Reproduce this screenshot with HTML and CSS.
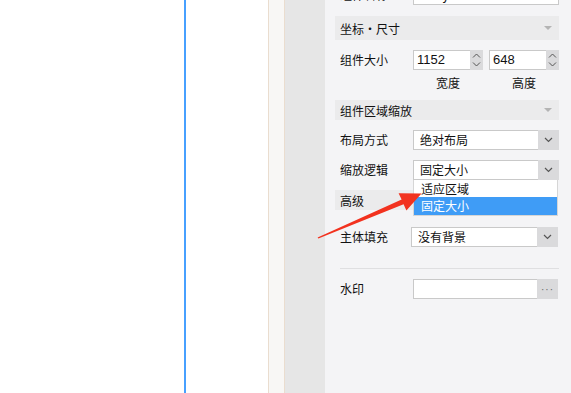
FILE: index.html
```html
<!DOCTYPE html>
<html lang="zh-CN">
<head>
<meta charset="utf-8">
<title>属性面板</title>
<link rel="stylesheet" href="styles.css">
</head>
<body>
<div class="app">
  <div class="canvas-left"></div>
  <div class="guide"></div>
  <div class="canvas-right"></div>
  <div class="ruler"></div>
  <div class="gutter"></div>
  <div class="panel">
    <div class="row row-first">
      <span class="label">组件名称</span>
      <div class="field field-wide"><span class="val">Body</span></div>
    </div>

    <div class="section section-tall"><span>坐标・尺寸</span><i class="tri"></i></div>

    <div class="row">
      <span class="label">组件大小</span>
      <div class="spin-group">
        <div class="spin"><span class="num">1152</span><span class="spin-btn"><svg width="9" height="16" viewBox="0 0 9 16"><path d="M1 5.5 L4.5 2 L8 5.5 M1 10.5 L4.5 14 L8 10.5" fill="none" stroke="#555" stroke-width="1"/></svg></span></div>
        <div class="spin"><span class="num">648</span><span class="spin-btn"><svg width="9" height="16" viewBox="0 0 9 16"><path d="M1 5.5 L4.5 2 L8 5.5 M1 10.5 L4.5 14 L8 10.5" fill="none" stroke="#555" stroke-width="1"/></svg></span></div>
      </div>
    </div>
    <div class="sub-labels">
      <span>宽度</span>
      <span>高度</span>
    </div>

    <div class="section"><span>组件区域缩放</span><i class="tri"></i></div>

    <div class="row row-gap">
      <span class="label">布局方式</span>
      <div class="select"><span class="val">绝对布局</span><span class="drop-btn"><svg width="9" height="6" viewBox="0 0 9 6"><path d="M1 1 L4.5 4.5 L8 1" fill="none" stroke="#555" stroke-width="1.2"/></svg></span></div>
    </div>
    <div class="row row-gap10 row-dd">
      <span class="label">缩放逻辑</span>
      <div class="select"><span class="val">固定大小</span><span class="drop-btn"><svg width="9" height="6" viewBox="0 0 9 6"><path d="M1 1 L4.5 4.5 L8 1" fill="none" stroke="#555" stroke-width="1.2"/></svg></span></div>
      <ul class="dropdown">
        <li>适应区域</li>
        <li class="active">固定大小</li>
      </ul>
    </div>

    <div class="section section-high"><span>高级</span></div>

    <div class="row row-fill">
      <span class="label">主体填充</span>
      <div class="select select-shift"><span class="val">没有背景</span><span class="drop-btn"><svg width="9" height="6" viewBox="0 0 9 6"><path d="M1 1 L4.5 4.5 L8 1" fill="none" stroke="#555" stroke-width="1.2"/></svg></span></div>
    </div>

    <div class="sep"></div>

    <div class="row row-mark">
      <span class="label">水印</span>
      <div class="select"><span class="val"></span><span class="drop-btn dots">···</span></div>
    </div>
  </div>
</div>
<svg class="arrow" width="571" height="393" viewBox="0 0 571 393">
  <polygon points="317.6,237.4 401.6,199.4 398.6,193.2 421.5,193.6 406.4,210.6 403.6,204.2 318.4,238.6" fill="#f2321f"/>
</svg>
</body>
</html>
```

FILE: styles.css
```css
* { box-sizing: border-box; }
html, body { margin: 0; padding: 0; }
body {
  width: 571px;
  height: 393px;
  overflow: hidden;
  position: relative;
  font-family: "Noto Sans CJK SC", "Microsoft YaHei", sans-serif;
  font-size: 12px;
  color: #111;
  background: #fff;
}
.app { display: flex; height: 393px; }
.canvas-left { width: 184px; background: #fff; }
.guide { width: 2px; background: #47a0ff; }
.canvas-right { width: 82px; background: #fff; }
.ruler {
  width: 17px;
  background: #f8f7f5;
  border-left: 1px solid #eaddcf;
  border-right: 1px solid #eaddcf;
}
.gutter { width: 40px; background: #e6e6e6; }
.panel {
  flex: 1;
  background: #f4f4f6;
  padding: 0 12px 0 10px;
  display: flex;
  flex-direction: column;
}
.row {
  display: flex;
  align-items: center;
  height: 20px;
  position: relative;
}
.label { width: 78px; padding-left: 5px; flex: none; line-height: 20px; }
.row-first { margin-top: -15px; }
.field, .select {
  flex: 1;
  height: 20px;
  display: flex;
  background: #fff;
  border: 1px solid #c9c9c9;
}
.val { flex: 1; line-height: 18px; padding-left: 6px; }
.drop-btn {
  width: 21px;
  flex: none;
  background: #dadadc;
  display: flex;
  align-items: center;
  justify-content: center;
  margin: -1px -1px -1px 0;
}
.dots { color: #666; font-size: 10px; letter-spacing: 1px; font-family: "Liberation Sans", sans-serif; }
.section {
  display: flex;
  align-items: center;
  justify-content: space-between;
  height: 20px;
  background: #ebebec;
  padding: 0 5px 0 4px;
  margin-top: 10px;
}
.section-tall { height: 24px; margin-top: 11px; }
.section span { padding-left: 1px; }
.tri {
  width: 0; height: 0;
  border-left: 4px solid transparent;
  border-right: 4px solid transparent;
  border-top: 4px solid #b4b4b4;
  margin-right: 2px;
}
.section-tall + .row { margin-top: 10px; }
.spin-group { display: flex; gap: 6px; flex: 1; }
.spin {
  width: 70px;
  height: 20px;
  display: flex;
  background: #fff;
  border: 1px solid #c9c9c9;
}
.num {
  flex: 1;
  font-family: "Liberation Sans", Arial, sans-serif;
  font-size: 13px;
  line-height: 18px;
  padding-left: 3px;
  color: #111;
}
.spin-btn {
  width: 13px;
  flex: none;
  background: #dadadc;
  margin: -1px -1px -1px 0;
  display: flex;
  align-items: center;
  justify-content: center;
}
.sub-labels {
  display: flex;
  gap: 6px;
  padding-left: 78px;
  height: 20px;
  align-items: center;
  margin-top: 2px;
}
.sub-labels span { width: 70px; text-align: center; }
.sub-labels + .section { margin-top: 8px; }
.row-gap { margin-top: 10px; }
.row-gap10 { margin-top: 10px; }
.dropdown {
  position: absolute;
  left: 78px;
  right: 1px;
  top: 20px;
  margin: 0;
  padding: 0;
  list-style: none;
  background: #fff;
  border: 1px solid #d6d6d6;
  border-top: none;
  z-index: 2;
}
.dropdown li { height: 17px; line-height: 17px; padding-left: 7px; font-size: 12px; }
.dropdown li.active { background: #3f9cf6; color: #fff; height: 18px; line-height: 18px; }
.section-high { width: 78px; }
.row-fill { margin-top: 17px; }
.select-shift { margin-left: -2px; margin-right: 1px; }
.sep { height: 1px; background: #dfdfe1; margin: 21px 0 0 5px; }
.row-mark { margin-top: 10px; }
.row-mark .select { margin-right: 1px; }
.arrow { position: absolute; left: 0; top: 0; pointer-events: none; z-index: 5; }
```
